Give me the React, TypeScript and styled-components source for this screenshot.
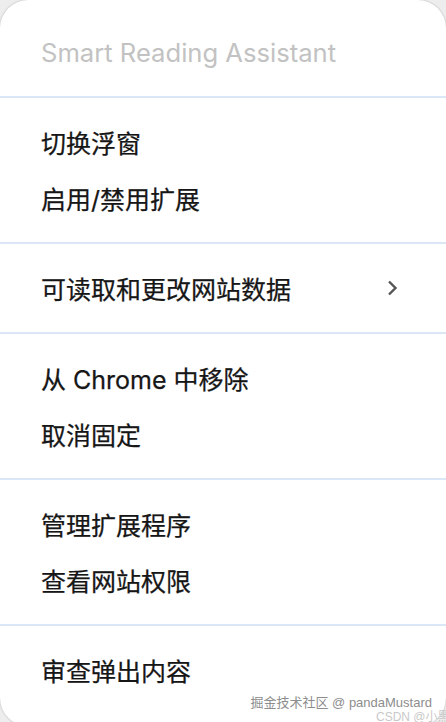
import styled, { createGlobalStyle } from "styled-components";

const GlobalStyle = createGlobalStyle`
  html, body {
    margin: 0;
    padding: 0;
    background: #ededed;
    overflow: hidden;
  }
  body {
    font-family: Inter, "Noto Sans CJK SC", sans-serif;
  }
`;

const Screen = styled.div`
  width: 446px;
  height: 722px;
  position: relative;
  overflow: hidden;
`;

const Menu = styled.div`
  width: 446px;
  height: 726px;
  background: #fff;
  border-radius: 28px;
  box-shadow: 0 0 2px rgba(0, 0, 0, 0.28);
  display: flex;
  flex-direction: column;
`;

const Title = styled.div`
  height: 96px;
  display: flex;
  align-items: center;
  padding: 8px 41px 0;
  box-sizing: border-box;
  font-size: 25.6px;
  color: #c2c2c2;
`;

const Section = styled.div`
  border-top: 2px solid #dbe6f7;
  padding: 16px 0 16px;
  display: flex;
  flex-direction: column;
`;

const Item = styled.div`
  height: 56px;
  display: flex;
  align-items: center;
  justify-content: space-between;
  padding: 0 50px 0 41px;
  font-size: 25px;
  color: #161616;
  -webkit-text-stroke: 0.25px #161616;
`;

const Chevron = styled.svg`
  width: 12px;
  height: 18px;
  margin-right: -2px;
`;

const Watermark = styled.div`
  position: absolute;
  right: 14px;
  bottom: 11px;
  font-size: 13px;
  color: #8d8d8d;
  font-family: "Liberation Sans", "Noto Sans CJK SC", sans-serif;
`;

const SubMark = styled.div`
  position: absolute;
  left: 376px;
  bottom: -2px;
  font-size: 12px;
  color: #c9c9c9;
  white-space: nowrap;
  font-family: "Liberation Sans", "Noto Sans CJK SC", sans-serif;
`;

const sections: { label: string; more?: boolean }[][] = [
  [{ label: "切换浮窗" }, { label: "启用/禁用扩展" }],
  [{ label: "可读取和更改网站数据", more: true }],
  [{ label: "从 Chrome 中移除" }, { label: "取消固定" }],
  [{ label: "管理扩展程序" }, { label: "查看网站权限" }],
  [{ label: "审查弹出内容" }],
];

export default function App() {
  return (
    <Screen>
      <GlobalStyle />
      <Menu>
        <Title>Smart Reading Assistant</Title>
        {sections.map((items, i) => (
          <Section key={i}>
            {items.map((item) => (
              <Item key={item.label}>
                <span>{item.label}</span>
                {item.more && (
                  <Chevron viewBox="0 0 12 18">
                    <path
                      d="M3 2.5l6.5 6.5-6.5 6.5"
                      fill="none"
                      stroke="#555"
                      strokeWidth="2.4"
                    />
                  </Chevron>
                )}
              </Item>
            ))}
          </Section>
        ))}
      </Menu>
      <Watermark>掘金技术社区 @ pandaMustard</Watermark>
      <SubMark>CSDN @小黑想</SubMark>
    </Screen>
  );
}
